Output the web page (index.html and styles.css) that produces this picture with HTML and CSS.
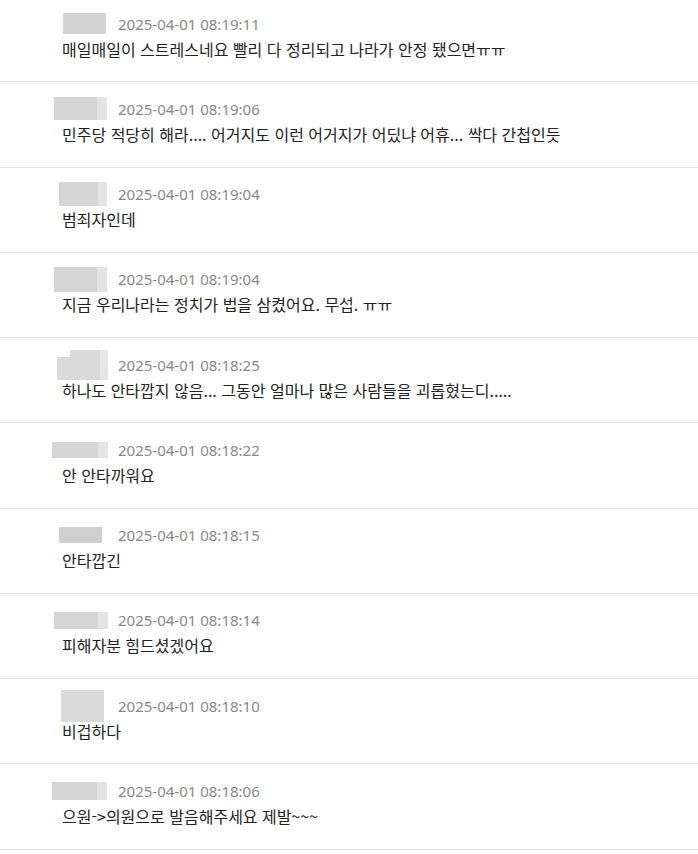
FILE: index.html
```html
<!DOCTYPE html>
<html lang="ko">
<head>
    <meta charset="UTF-8">
    <meta name="viewport" content="width=device-width, initial-scale=1.0">
    <link rel="stylesheet" href="styles.css">
    <title>댓글</title>
</head>
<body>

    <ul class="comment-list">
        <li class="comment">
            <div class="meta">
                <span class="nick-slot"><span class="nick n1"></span></span>
                <span class="date">2025-04-01 08:19:11</span>
            </div>
            <p class="text">매일매일이 스트레스네요 빨리 다 정리되고 나라가 안정 됐으면ㅠㅠ</p>
        </li>
        <li class="comment">
            <div class="meta">
                <span class="nick-slot"><span class="nick n2"></span></span>
                <span class="date">2025-04-01 08:19:06</span>
            </div>
            <p class="text">민주당 적당히 해라.... 어거지도 이런 어거지가 어딨냐 어휴... 싹다 간첩인듯</p>
        </li>
        <li class="comment">
            <div class="meta">
                <span class="nick-slot"><span class="nick n3"></span></span>
                <span class="date">2025-04-01 08:19:04</span>
            </div>
            <p class="text">범죄자인데</p>
        </li>
        <li class="comment">
            <div class="meta">
                <span class="nick-slot"><span class="nick n4"></span></span>
                <span class="date">2025-04-01 08:19:04</span>
            </div>
            <p class="text">지금 우리나라는 정치가 법을 삼켰어요. 무섭. ㅠㅠ</p>
        </li>
        <li class="comment">
            <div class="meta">
                <span class="nick-slot"><span class="nick n5"></span></span>
                <span class="date">2025-04-01 08:18:25</span>
            </div>
            <p class="text">하나도 안타깝지 않음... 그동안 얼마나 많은 사람들을 괴롭혔는디.....</p>
        </li>
        <li class="comment">
            <div class="meta">
                <span class="nick-slot"><span class="nick n6"></span></span>
                <span class="date">2025-04-01 08:18:22</span>
            </div>
            <p class="text">안 안타까워요</p>
        </li>
        <li class="comment">
            <div class="meta">
                <span class="nick-slot"><span class="nick n7"></span></span>
                <span class="date">2025-04-01 08:18:15</span>
            </div>
            <p class="text">안타깝긴</p>
        </li>
        <li class="comment">
            <div class="meta">
                <span class="nick-slot"><span class="nick n8"></span></span>
                <span class="date">2025-04-01 08:18:14</span>
            </div>
            <p class="text">피해자분 힘드셨겠어요</p>
        </li>
        <li class="comment">
            <div class="meta">
                <span class="nick-slot"><span class="nick n9"></span></span>
                <span class="date">2025-04-01 08:18:10</span>
            </div>
            <p class="text">비겁하다</p>
        </li>
        <li class="comment">
            <div class="meta">
                <span class="nick-slot"><span class="nick n10"></span></span>
                <span class="date">2025-04-01 08:18:06</span>
            </div>
            <p class="text">으원-&gt;의원으로 발음해주세요 제발~~~</p>
        </li>
    </ul>

</body>
</html>
```

FILE: styles.css
```css
body {
    margin: 0;
    padding: 0;
    background: #ffffff;
    color: #222222;
    font-family: "Noto Sans CJK KR", "Noto Sans", sans-serif;
}

.comment-list {
    list-style: none;
    margin: -3px 0 0; /* list is scrolled a little */
    padding: 0;
}

.comment {
    padding: 15.5px 0 21.75px;
    border-bottom: 1px solid #e6e6e6;
}

.meta {
    display: flex;
    align-items: center;
    height: 22px;
    padding-left: 50px;
}

.nick-slot {
    flex: none;
    width: 68px;
    display: flex;
    align-items: center;
}

/* blurred nicknames */
.nick {
    display: block;
    background: linear-gradient(to right, #d5d5d5 82%, #e4e4e4 82%);
}

.n1 { margin-left: 13px; width: 43px; height: 21px; background: #d4d4d4; }
.n2 { margin-left: 4px; width: 53px; height: 23px; }
.n3 { margin-left: 9px; width: 48px; height: 24px; }
.n4 { margin-left: 4px; width: 53px; height: 25px; }
.n5 {
    margin-left: 7px;
    width: 51px;
    height: 30px;
    background:
        linear-gradient(#ffffff, #ffffff) no-repeat 0 0 / 13px 7px,
        linear-gradient(to right, #dadada 84%, #e6e6e6 84%);
}
.n6 { margin-left: 2px; width: 56px; height: 16px; }
.n7 { margin-left: 9px; width: 43px; height: 16px; background: #cfcfcf; }
.n8 { margin-left: 4px; width: 54px; height: 17px; }
.n9 { margin-left: 11px; width: 43px; height: 32px; background: #dadada; }
.n10 { margin-left: 2px; width: 55px; height: 18px; }

.date {
    font-family: "Noto Sans", sans-serif;
    font-size: 15px;
    color: #888888;
    white-space: nowrap;
}

.text {
    margin: 3px 0 0;
    padding-left: 62px;
    font-size: 16px;
    line-height: 22px;
    color: #222222;
}
```
